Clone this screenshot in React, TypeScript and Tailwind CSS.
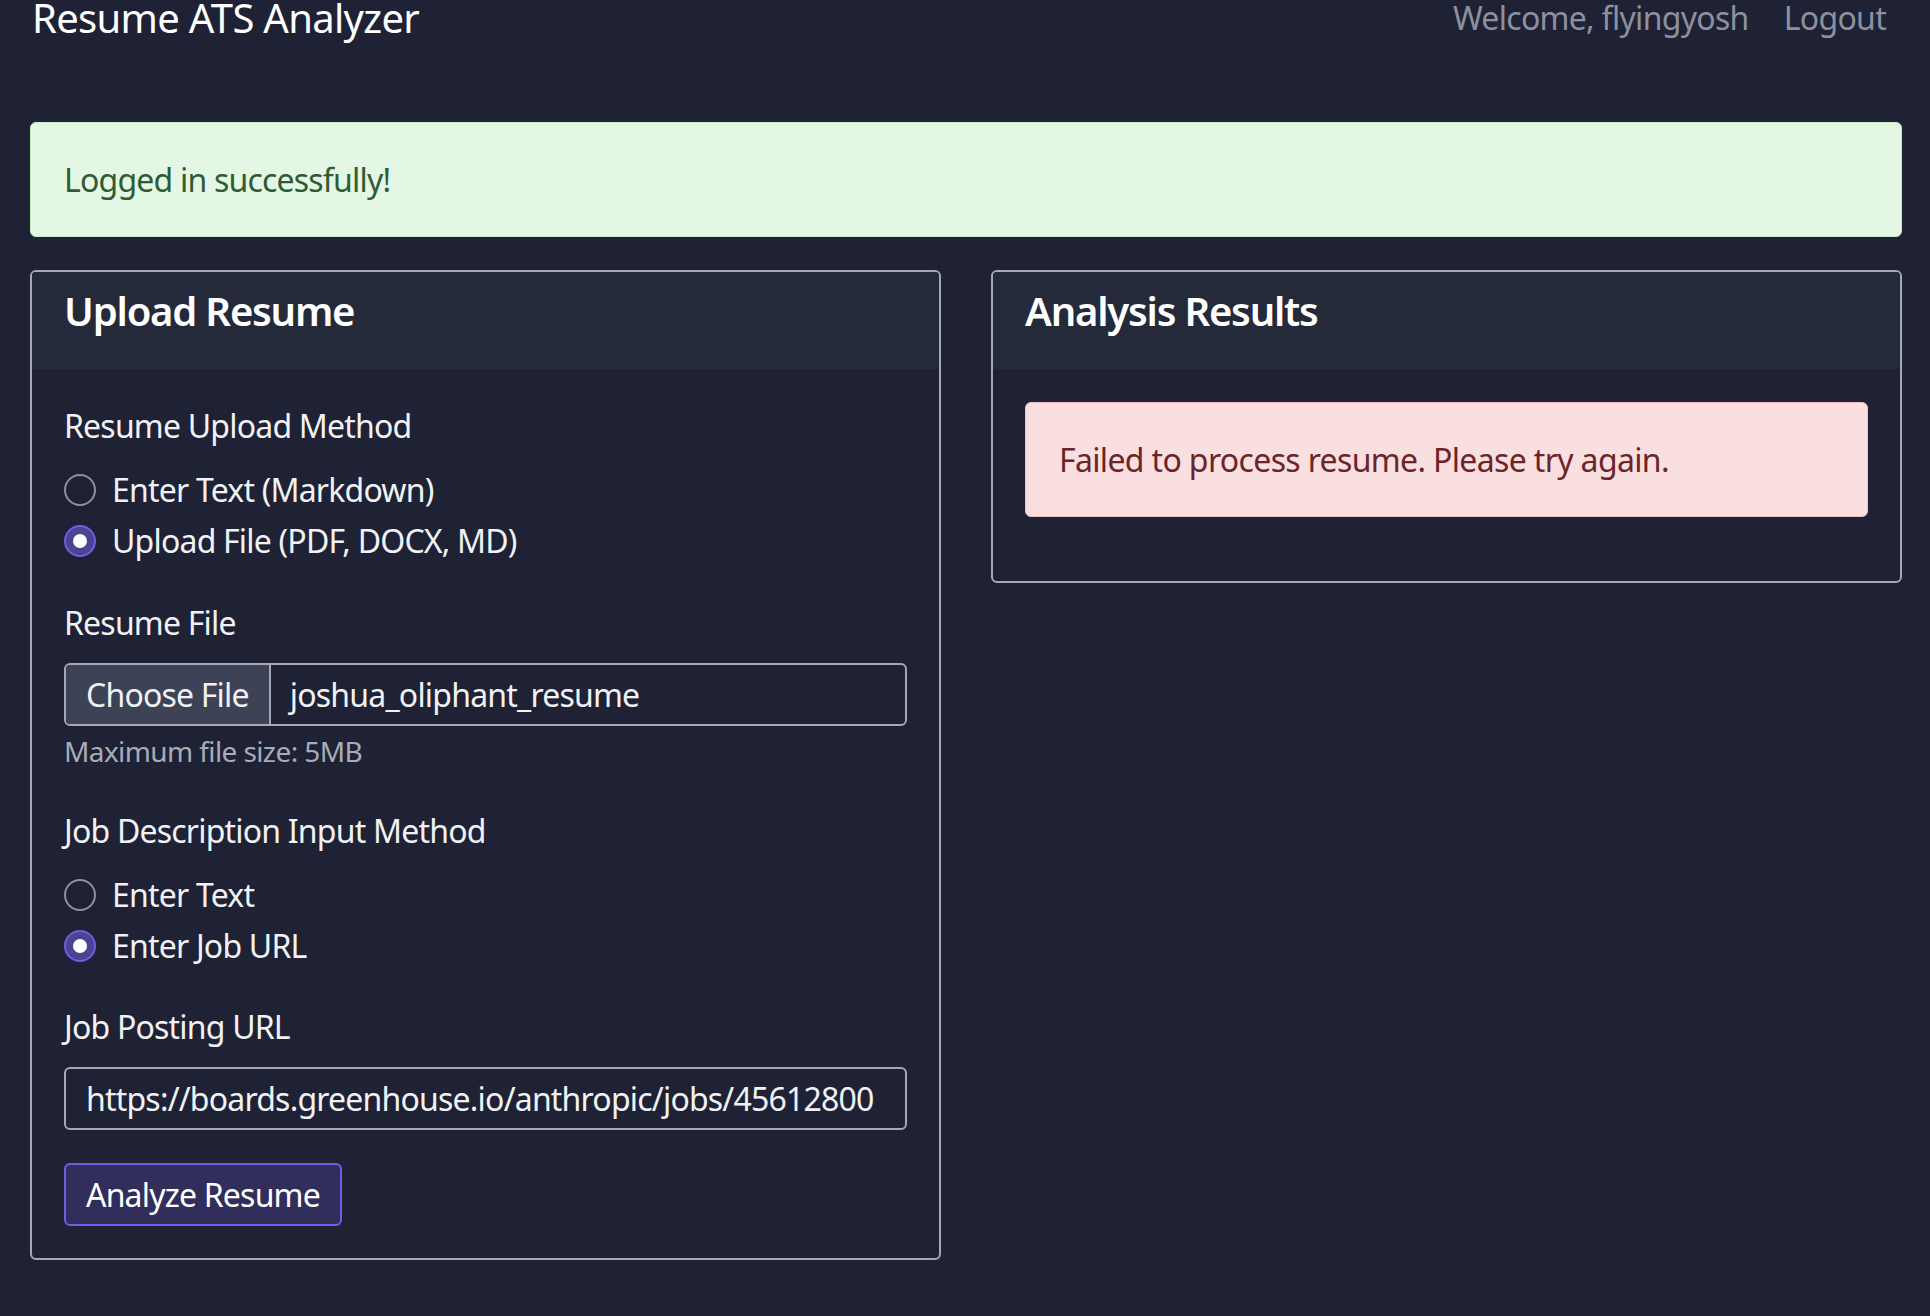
import React from "react";

const font = { fontFamily: '"Noto Sans", "Open Sans", sans-serif' };

function Radio({ label, checked }: { label: string; checked?: boolean }) {
  return (
    <div className="flex items-center h-[51px] gap-[16px]">
      {checked ? (
        <span className="w-[32px] h-[32px] rounded-full border-2 border-[#6b5fe6] bg-[#4a4493] flex items-center justify-center">
          <span className="w-[14px] h-[14px] rounded-full bg-white" />
        </span>
      ) : (
        <span className="w-[32px] h-[32px] rounded-full border-2 border-[#8c90a0]" />
      )}
      <span className="text-[32px] leading-[48px] text-[#f1f2f5]">{label}</span>
    </div>
  );
}

function Label({ children }: { children: React.ReactNode }) {
  return <div className="text-[32px] leading-[48px] text-[#f1f2f5]">{children}</div>;
}

function Card({ title, children }: { title: string; children: React.ReactNode }) {
  return (
    <div className="border-2 border-[#a4a8b7] rounded-[6px] overflow-hidden self-start">
      <div className="h-[97px] bg-[#252a3a] px-[32px] pt-[15px]">
        <h2 className="text-[40px] leading-[48px] font-semibold tracking-[-1.2px] text-white">{title}</h2>
      </div>
      <div className="px-[32px] pt-[33px] pb-[32px]">{children}</div>
    </div>
  );
}

export default function App() {
  return (
    <div style={font} className="min-h-screen bg-[#1e2234] pl-[30px] pr-[28px] tracking-[-0.8px]">
      {/* header */}
      <header className="flex justify-between items-start">
        <h1 className="pl-[2px] text-[40px] leading-[40px] -mt-[2px] tracking-[-0.7px] text-white">Resume ATS Analyzer</h1>
        <nav className="flex gap-[35px] pr-[16px] text-[32px] leading-[36px] tracking-[-0.7px] text-[#8d919f]">
          <span>Welcome, flyingyosh</span>
          <span>Logout</span>
        </nav>
      </header>

      <div className="mt-[84px] border border-[#c6edc6] bg-[#e4f6e4] rounded-[6px] px-[33px] py-[32px] text-[32px] leading-[49px] text-[#2f5b34]">
        Logged in successfully!
      </div>

      <div className="mt-[33px] grid grid-cols-2 gap-[50px]">
        <Card title="Upload Resume">
          <Label>Resume Upload Method</Label>
          <div className="mt-[14px]">
            <Radio label="Enter Text (Markdown)" />
            <Radio label="Upload File (PDF, DOCX, MD)" checked />
          </div>

          <div className="mt-[33px]">
            <Label>Resume File</Label>
          </div>
          <div className="mt-[16px] h-[63px] flex border-2 border-[#a4a8b7] rounded-[6px] overflow-hidden text-[32px]">
            <span className="bg-[#3d4257] border-r-2 border-[#a4a8b7] px-[20px] flex items-center text-[#f1f2f5] whitespace-nowrap">
              Choose File
            </span>
            <span className="px-[19px] flex items-center text-[#f1f2f5] whitespace-nowrap">joshua_oliphant_resume</span>
          </div>
          <div className="mt-[7px] text-[28px] leading-[36px] tracking-[-0.6px] text-[#a8acb8]">Maximum file size: 5MB</div>

          <div className="mt-[38px]">
            <Label>Job Description Input Method</Label>
          </div>
          <div className="mt-[14px]">
            <Radio label="Enter Text" />
            <Radio label="Enter Job URL" checked />
          </div>

          <div className="mt-[32px]">
            <Label>Job Posting URL</Label>
          </div>
          <div className="mt-[16px] h-[63px] flex items-center border-2 border-[#a4a8b7] rounded-[6px] overflow-hidden px-[20px] text-[32px] text-[#f1f2f5] whitespace-nowrap">
            https://boards.greenhouse.io/anthropic/jobs/45612800
          </div>

          <button className="mt-[33px] h-[63px] px-[20px] border-2 border-[#6b5fe6] bg-[#312e5c] rounded-[6px] text-[32px] text-white">
            Analyze Resume
          </button>
        </Card>

        <Card title="Analysis Results">
          <div className="mb-[32px] border border-[#f1bfc0] bg-[#f9dfe0] rounded-[6px] px-[33px] py-[32px] text-[32px] leading-[49px] tracking-[-0.65px] text-[#6c2428]">
            Failed to process resume. Please try again.
          </div>
        </Card>
      </div>
    </div>
  );
}
